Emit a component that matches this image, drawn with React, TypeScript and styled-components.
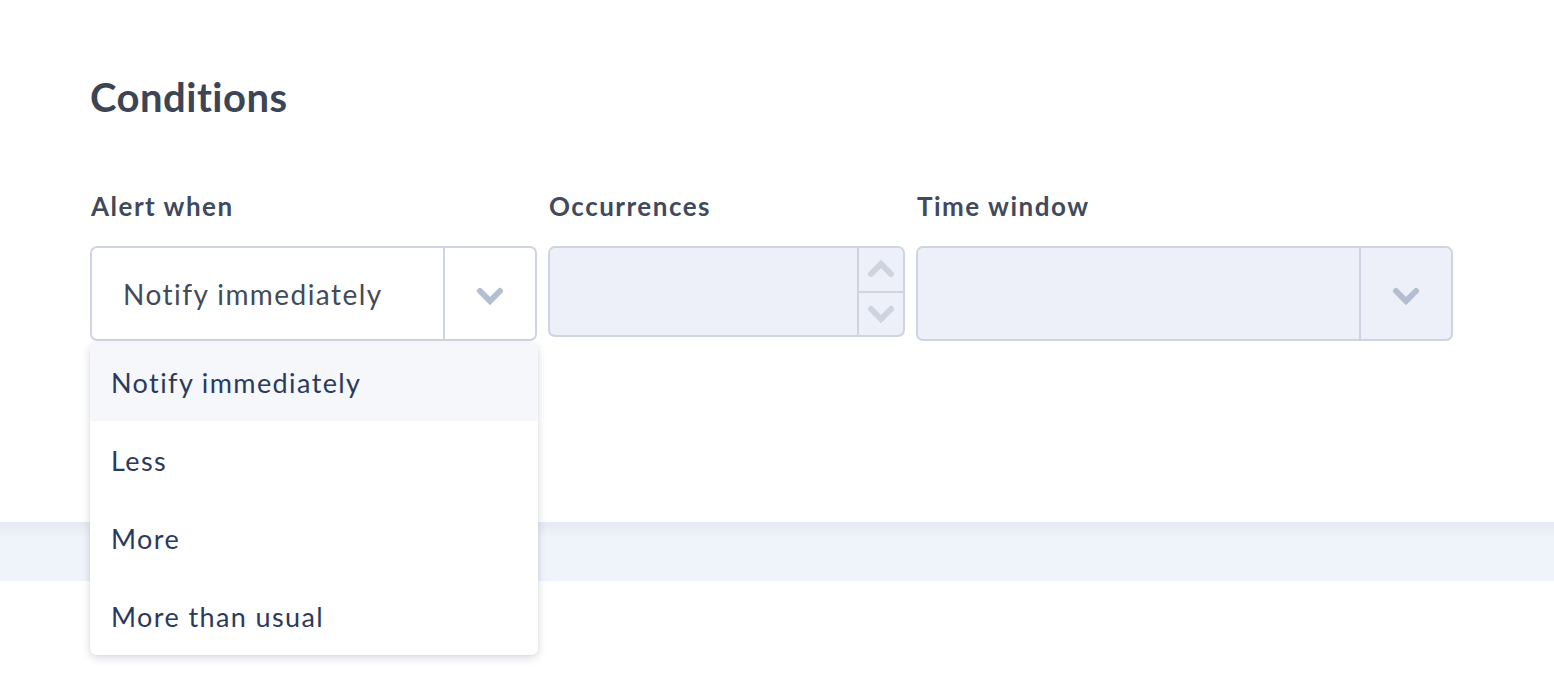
import React from "react";
import styled, { createGlobalStyle } from "styled-components";

const Global = createGlobalStyle`
  html, body { margin: 0; padding: 0; background: #ffffff; }
  body { font-family: "Lato", "Noto Sans", sans-serif; -webkit-font-smoothing: antialiased; }
  * { box-sizing: border-box; }
`;

const Page = styled.div`
  width: 1554px;
  height: 686px;
  overflow: hidden;
  display: flex;
  flex-direction: column;
`;

const Section = styled.section`
  padding: 73px 0 0 90px;
  display: flex;
  flex-direction: column;
`;

const Heading = styled.h2`
  margin: 0;
  font-size: 40px;
  line-height: 48px;
  font-weight: 700;
  letter-spacing: 0.5px;
  color: #3c4456;
`;

const Fields = styled.div`
  margin-top: 69px;
  display: grid;
  grid-template-columns: 447px 357px 537px;
  column-gap: 11px;
  row-gap: 24px;
  align-items: start;
`;

const Label = styled.div`
  font-size: 26px;
  line-height: 32px;
  font-weight: 700;
  letter-spacing: 1.5px;
  color: #414a5c;
  padding-left: 1px;
`;

const Field = styled.div`
  position: relative;
`;

const Control = styled.div<{ $disabled?: boolean; $h: number }>`
  height: ${(p) => p.$h}px;
  display: flex;
  border: 2px solid #ced4e1;
  border-radius: 7px;
  background: ${(p) => (p.$disabled ? "#edf0f8" : "#ffffff")};
  overflow: hidden;
`;

const Value = styled.div`
  flex: 1;
  display: flex;
  align-items: center;
  padding-left: 31px;
  font-size: 28px;
  letter-spacing: 1.45px;
  color: #434a59;
`;

const ArrowBox = styled.div<{ $w: number }>`
  width: ${(p) => p.$w}px;
  border-left: 2px solid #ced4e1;
  display: flex;
  align-items: center;
  justify-content: center;
  padding-top: 4px;
`;

const Spinner = styled.div`
  width: 46px;
  border-left: 2px solid #ced4e1;
  display: flex;
  flex-direction: column;
`;

const SpinBtn = styled.div<{ $top?: boolean }>`
  flex: 1;
  display: flex;
  align-items: center;
  justify-content: center;
  border-bottom: ${(p) => (p.$top ? "2px solid #ced4e1" : "none")};
`;

const Menu = styled.ul`
  position: absolute;
  left: 0;
  top: 97px;
  width: 448px;
  margin: 0;
  padding: 0;
  list-style: none;
  background: #ffffff;
  border-radius: 7px;
  box-shadow: 0 3px 8px rgba(40, 50, 80, 0.18), 0 0 2px rgba(40, 50, 80, 0.08);
  overflow: hidden;
  z-index: 10;
`;

const MenuItem = styled.li<{ $active?: boolean }>`
  height: 78px;
  display: flex;
  align-items: center;
  padding-left: 21px;
  font-size: 27px;
  letter-spacing: 1.4px;
  color: #2b3a5c;
  background: ${(p) => (p.$active ? "#f5f7fb" : "#ffffff")};
`;

const Band = styled.div`
  margin-top: 181px;
  height: 59px;
  background: linear-gradient(to bottom, #e5e9f1 0px, #eff3fa 16px, #eff3fa 100%);
`;

const Chevron = ({ up, color }: { up?: boolean; color: string }) => (
  <svg width="28" height="18" viewBox="0 0 28 18" fill="none">
    <polyline
      points={up ? "4,14 14,4 24,14" : "4,4 14,14 24,4"}
      stroke={color}
      strokeWidth="6"
      strokeLinecap="round"
      strokeLinejoin="miter"
    />
  </svg>
);

const options = ["Notify immediately", "Less", "More", "More than usual"];

export default function App() {
  return (
    <Page>
      <Global />
      <Section>
        <Heading>Conditions</Heading>
        <Fields>
          <Label>Alert when</Label>
          <Label>Occurrences</Label>
          <Label>Time window</Label>
          <Field>
            <Control $h={95}>
              <Value>Notify immediately</Value>
              <ArrowBox $w={92}>
                <Chevron color="#b4bfd2" />
              </ArrowBox>
            </Control>
            <Menu>
              {options.map((o, i) => (
                <MenuItem key={o} $active={i === 0}>
                  {o}
                </MenuItem>
              ))}
            </Menu>
          </Field>
          <Field>
            <Control $h={91} $disabled>
              <Value />
              <Spinner>
                <SpinBtn $top>
                  <Chevron up color="#cdd4e0" />
                </SpinBtn>
                <SpinBtn>
                  <Chevron color="#cdd4e0" />
                </SpinBtn>
              </Spinner>
            </Control>
          </Field>
          <Field>
            <Control $h={95} $disabled>
              <Value />
              <ArrowBox $w={92}>
                <Chevron color="#b4bed0" />
              </ArrowBox>
            </Control>
          </Field>
        </Fields>
      </Section>
      <Band />
    </Page>
  );
}
